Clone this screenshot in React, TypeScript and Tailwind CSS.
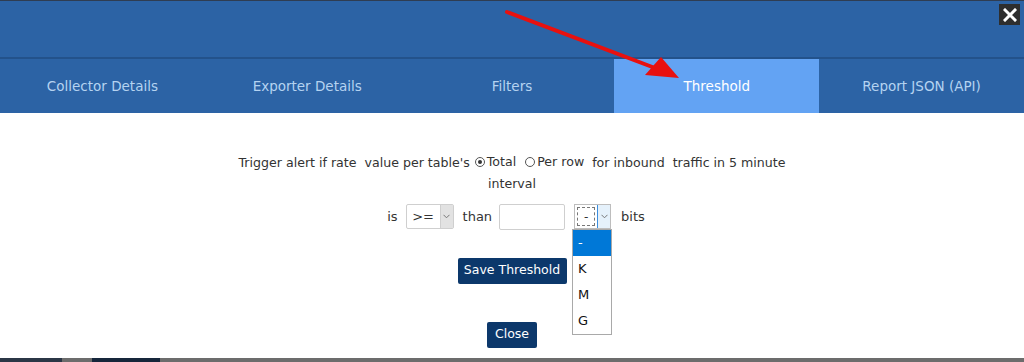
import React, { useState } from 'react';

const TABS = ['Collector Details', 'Exporter Details', 'Filters', 'Threshold', 'Report JSON (API)'];
const UNITS = ['-', 'K', 'M', 'G'];

const Radio: React.FC<{ checked?: boolean; label: string }> = ({ checked, label }) => (
    <span className="inline-flex items-center ml-[5px] mr-[4px]">
        <span className="relative w-[10px] h-[10px] rounded-full border border-[#555] bg-white mr-[2px]">
            {checked && <span className="absolute left-[2px] top-[2px] w-[4px] h-[4px] rounded-full bg-[#333]" />}
        </span>
        <span>{label}</span>
    </span>
);

const Chevron: React.FC = () => (
    <svg width="7" height="5" viewBox="0 0 7 5" fill="none">
        <path d="M0.5 0.8 L3.5 3.8 L6.5 0.8" stroke="#777" strokeWidth="1" />
    </svg>
);

const App: React.FC = () => {
    const [activeTab] = useState('Threshold');
    const [scope] = useState<'total' | 'row'>('total');

    return (
        <div className="relative flex flex-col h-[362px] w-[1024px] overflow-hidden bg-white font-['DejaVu_Sans',Verdana,sans-serif] text-[#333]">
            {/* top edge */}
            <div className="h-[1px] bg-[#2f3d52]" />

            {/* header */}
            <header className="h-[56px] bg-[#2c63a5] flex justify-end items-start pt-[3px] pr-[4px]">
                <button className="w-[21px] h-[21px] bg-[#2e2e2e] flex items-center justify-center">
                    <svg width="14" height="14" viewBox="0 0 14 14">
                        <path d="M2 2 L12 12 M12 2 L2 12" stroke="white" strokeWidth="3" strokeLinecap="square" />
                    </svg>
                </button>
            </header>
            <div className="h-[2px] bg-[#23528b]" />

            {/* tabs */}
            <nav className="h-[54px] bg-[#2c63a5] grid grid-cols-5">
                {TABS.map((t) => (
                    <div
                        key={t}
                        className={
                            t === activeTab
                                ? 'flex items-center justify-center bg-[#63a3f3] text-white text-[13.5px]'
                                : 'flex items-center justify-center text-[#b5d3f1] text-[13.5px]'
                        }
                    >
                        {t}
                    </div>
                ))}
            </nav>

            {/* content */}
            <main className="flex-1 flex flex-col items-center pt-[38px] text-[13px]">
                <p className="w-[560px] text-center leading-[21px] text-[12.6px]">
                    <span>Trigger alert if rate&nbsp; value per table's</span>
                    <Radio checked={scope === 'total'} label="Total" />
                    <Radio checked={scope === 'row'} label="Per row" />
                    <span>&nbsp;for inbound&nbsp; traffic in 5 minute</span>
                    <br />
                    <span>interval</span>
                </p>

                <div className="mt-[10px] flex items-center h-[26px] ml-[8px]">
                    <span>is</span>
                    <div className="ml-[8px] w-[48px] h-[25px] flex border border-[#cfcfcf] rounded-[2px] bg-white">
                        <span className="flex-1 flex items-center justify-center text-[13px]">&gt;=</span>
                        <span className="w-[13px] bg-[#e2e2e2] flex items-center justify-center border-l border-[#cfcfcf]">
                            <Chevron />
                        </span>
                    </div>
                    <span className="ml-[9px]">than</span>
                    <input className="ml-[7px] w-[66px] h-[26px] border border-[#cfcfcf] rounded-[2px] outline-none" />
                    <div className="relative ml-[9px] w-[37px] h-[25px] flex border border-[#bdbdbd] bg-white">
                        <span className="m-[2px] flex-1 flex items-center justify-center border border-dashed border-[#777] text-[12px]">-</span>
                        <span className="w-[13px] bg-[#e5f1fb] border-l border-[#3c8ede] flex items-center justify-center">
                            <Chevron />
                        </span>
                        <ul className="absolute left-[-3px] top-[24px] w-[40px] border border-[#a9a9a9] bg-white z-10">
                            {UNITS.map((u, i) => (
                                <li
                                    key={u}
                                    className={
                                        i === 0
                                            ? 'h-[26px] flex items-center pl-[5px] bg-[#0078d7] text-white text-[13px]'
                                            : 'h-[26px] flex items-center pl-[5px] text-[#111] text-[13px]'
                                    }
                                >
                                    {u}
                                </li>
                            ))}
                        </ul>
                    </div>
                    <span className="ml-[10px]">bits</span>
                </div>

                <button className="mt-[28px] w-[109px] h-[26px] bg-[#0c386b] text-white text-[12.5px] rounded-[2px]">
                    Save Threshold
                </button>

                <button className="mt-[38px] w-[50px] h-[26px] bg-[#0c386b] text-white text-[12.5px] rounded-[2px]">
                    Close
                </button>
            </main>

            {/* bottom strip */}
            <div className="h-[4px] flex bg-[#6c6c6c]">
                <div className="w-[62px] bg-[#2b3646]" />
                <div className="w-[30px]" />
                <div className="w-[68px] bg-[#16263b]" />
            </div>

            {/* annotation arrow */}
            <svg className="absolute inset-0 pointer-events-none" width="1024" height="362">
                <line x1="507" y1="12" x2="655" y2="68" stroke="#e8110f" strokeWidth="4" strokeLinecap="round" />
                <polygon points="679,78 645,75 661,57" fill="#e8110f" />
            </svg>
        </div>
    );
};

export default App;
